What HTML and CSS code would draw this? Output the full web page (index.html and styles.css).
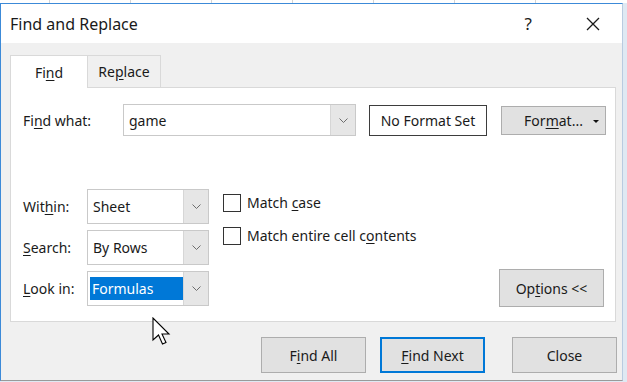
FILE: index.html
```html
<!DOCTYPE html>
<html lang="en">
<head>
    <meta charset="UTF-8">
    <title>Find and Replace</title>
    <link rel="stylesheet" href="styles.css">
</head>
<body>
    <div class="sheet-strip">
        <span></span><span></span><span></span><span></span><span></span><span></span><span></span>
    </div>

    <div class="window">
        <div class="titlebar">
            <div class="title">Find and Replace</div>
            <div class="help">?</div>
            <svg class="close-x" width="14" height="14" viewBox="0 0 14 14">
                <path d="M1 1 L13 13 M13 1 L1 13" stroke="#1a1a1a" stroke-width="1.3" fill="none"/>
            </svg>
        </div>

        <div class="dialog">
            <div class="tabs">
                <div class="tab active">Fi<u>n</u>d</div>
                <div class="tab">Re<u>p</u>lace</div>
            </div>

            <div class="panel">
                <div class="find-row">
                    <label class="label">Fi<u>n</u>d what:</label>
                    <div class="combo wide">
                        <span class="combo-text">game</span>
                        <span class="combo-arrow">
                            <svg width="9" height="5" viewBox="0 0 9 5"><path d="M0.5 0.5 L4.5 4.5 L8.5 0.5" stroke="#6d6d6d" fill="none"/></svg>
                        </span>
                    </div>
                    <div class="format-box">No Format Set</div>
                    <div class="btn format-btn">For<u>m</u>at...<span class="caret"></span></div>
                </div>

                <div class="options-area">
                    <div class="selects">
                        <div class="select-row">
                            <label class="label short">Wit<u>h</u>in:</label>
                            <div class="combo">
                                <span class="combo-text">Sheet</span>
                                <span class="combo-arrow">
                                    <svg width="9" height="5" viewBox="0 0 9 5"><path d="M0.5 0.5 L4.5 4.5 L8.5 0.5" stroke="#6d6d6d" fill="none"/></svg>
                                </span>
                            </div>
                        </div>
                        <div class="select-row">
                            <label class="label short"><u>S</u>earch:</label>
                            <div class="combo">
                                <span class="combo-text">By Rows</span>
                                <span class="combo-arrow">
                                    <svg width="9" height="5" viewBox="0 0 9 5"><path d="M0.5 0.5 L4.5 4.5 L8.5 0.5" stroke="#6d6d6d" fill="none"/></svg>
                                </span>
                            </div>
                        </div>
                        <div class="select-row">
                            <label class="label short"><u>L</u>ook in:</label>
                            <div class="combo">
                                <span class="combo-text selected">Formulas</span>
                                <span class="combo-arrow">
                                    <svg width="9" height="5" viewBox="0 0 9 5"><path d="M0.5 0.5 L4.5 4.5 L8.5 0.5" stroke="#6d6d6d" fill="none"/></svg>
                                </span>
                            </div>
                        </div>
                    </div>

                    <div class="checks">
                        <div class="check"><span class="box"></span><span>Match <u>c</u>ase</span></div>
                        <div class="check"><span class="box"></span><span>Match entire cell c<u>o</u>ntents</span></div>
                    </div>

                    <div class="btn options-btn">Op<u>t</u>ions &lt;&lt;</div>
                </div>
            </div>

            <div class="actions">
                <div class="btn">F<u>i</u>nd All</div>
                <div class="btn default"><u>F</u>ind Next</div>
                <div class="btn close-btn">Close</div>
            </div>
        </div>
    </div>

    <!-- mouse pointer over the dialog -->
    <svg class="cursor" width="20" height="29" viewBox="0 0 20 29">
        <path d="M1 1 L1 23 L6.5 18 L10.5 27 L14 25.5 L10 17 L17 17 Z" fill="#fff" stroke="#000" stroke-width="1.1" stroke-linejoin="miter"/>
    </svg>
</body>
</html>
```

FILE: styles.css
```css
body {
    margin: 0;
    width: 627px;
    height: 382px;
    overflow: hidden;
    position: relative;
    background: #dfe9f3;
    font-family: "Noto Sans", "Open Sans", sans-serif;
    font-size: 14px;
    color: #1a1a1a;
}
u { text-underline-offset: 2px; }

.sheet-strip {
    display: flex;
    height: 3px;
    background: #fff;
}
.sheet-strip span {
    width: 80px;
    border-right: 1px solid #d4d4d4;
    flex-shrink: 0;
}
.sheet-strip span:first-child { width: 49px; }

.window {
    width: 621px;
    height: 376px;
    border-left: 1px solid #3c8ad8;
    border-top: 1px solid #3c8ad8;
    border-right: 1px solid #b9cbe0;
    border-bottom: 1px solid #9a9a9a;
    display: flex;
    flex-direction: column;
    background: #f0f0f0;
}

.titlebar {
    height: 39px;
    background: #fff;
    display: flex;
    align-items: center;
    padding-left: 9px;
}
.title {
    font-size: 16px;
    flex: 1;
}
.help {
    font-size: 17px;
    margin-right: 54px;
}
.close-x { margin-right: 22px; }

.dialog {
    flex: 1;
    padding: 11px 5px 0 9px;
}

.tabs {
    display: flex;
    height: 33px;
    align-items: flex-end;
}
.tab {
    height: 32px;
    width: 74px;
    box-sizing: border-box;
    border: 1px solid #d9d9d9;
    border-bottom: none;
    display: flex;
    align-items: center;
    justify-content: center;
    background: #f0f0f0;
}
.tab.active {
    width: 77px;
    height: 33px;
    background: #fff;
    position: relative;
    top: 1px;
    border-right: none;
}

.panel {
    width: 606px;
    height: 235px;
    box-sizing: border-box;
    background: #fff;
    border: 1px solid #d9d9d9;
    padding: 16px 0 0 12px;
}

.find-row {
    display: flex;
    align-items: center;
    height: 32px;
}
.label { width: 100px; }
.label.short { width: 64px; }

.combo {
    display: flex;
    height: 35px;
    width: 122px;
    box-sizing: border-box;
    border: 1px solid #c9c9c9;
    background: #fff;
}
.combo.wide {
    width: 233px;
    height: 32px;
}
.combo-text {
    flex: 1;
    display: flex;
    align-items: center;
    padding-left: 5px;
}
.combo-text.selected {
    margin: 5px 0 5px 2px;
    padding-left: 2px;
    background: #0078d7;
    color: #fff;
}
.combo-arrow {
    width: 24px;
    background: #e6e6e6;
    border-left: 1px solid #d6d6d6;
    display: flex;
    align-items: center;
    justify-content: center;
}

.format-box {
    margin-left: 13px;
    width: 118px;
    height: 31px;
    box-sizing: border-box;
    border: 1px solid #3d3d3d;
    display: flex;
    align-items: center;
    justify-content: center;
}

.btn {
    width: 105px;
    height: 36px;
    box-sizing: border-box;
    background: #e1e1e1;
    border: 1px solid #adadad;
    display: flex;
    align-items: center;
    justify-content: center;
}
.format-btn {
    margin-left: 14px;
    height: 29px;
    position: relative;
}
.caret {
    position: absolute;
    right: 6px;
    top: 13px;
    border-left: 3px solid transparent;
    border-right: 3px solid transparent;
    border-top: 3px solid #111;
}

.options-area {
    display: flex;
    margin-top: 53px;
}
.selects {
    display: flex;
    flex-direction: column;
    gap: 6px;
}
.select-row {
    display: flex;
    align-items: center;
}

.checks {
    margin-left: 14px;
    display: flex;
    flex-direction: column;
    gap: 14px;
    padding-top: 4px;
}
.check {
    display: flex;
    align-items: center;
    height: 19px;
}
.box {
    width: 18px;
    height: 18px;
    box-sizing: border-box;
    border: 1px solid #333;
    margin-right: 6px;
}

.options-btn {
    margin-left: auto;
    margin-right: 11px;
    align-self: flex-end;
    height: 38px;
    margin-bottom: -1px;
}

.actions {
    display: flex;
    justify-content: flex-end;
    margin-top: 15px;
    gap: 14px;
}
.actions .default {
    border: 2px solid #0078d7;
}
.actions .close-btn {
    margin-left: 13px;
}

.cursor {
    position: absolute;
    left: 152px;
    top: 317px;
}
```
